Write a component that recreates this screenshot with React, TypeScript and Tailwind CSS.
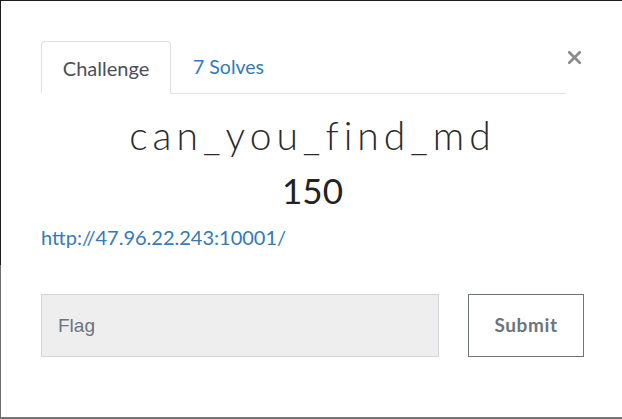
import { X } from "lucide-react";

const App = () => {
  return (
    <div className="w-[622px] h-[419px] bg-[linear-gradient(to_bottom,#1c1c1c_265px,#6e6e6e_265px)] pl-px pt-px pb-px overflow-hidden">
      <div className="relative h-full w-full bg-white border-b border-[#7a7a7a] pl-10 pr-[38px] pt-10 font-['Lato','Open_Sans',sans-serif]">
        {/* Close button */}
        <button className="absolute right-[37px] top-[46px] text-[#8a8a8a]">
          <X className="w-[21px] h-[21px]" strokeWidth={3} />
        </button>

        {/* Tabs */}
        <div className="flex w-[525px] border-b border-[#dee2e6] h-[53px]">
          <div className="-mb-px flex items-center justify-center w-[130px] border border-[#dee2e6] border-b-white bg-white rounded-t-[4px] text-[20px] text-[#495057]">
            Challenge
          </div>
          <div className="flex items-center px-[22px] text-[19.5px] text-[#337ab7]">
            7 Solves
          </div>
        </div>

        {/* Title + value */}
        <h2 className="mt-[18px] text-center text-[39px] leading-[46px] tracking-[5px] text-[#2b2b2b] font-light font-['Lato',sans-serif]">
          can_you_find_md
        </h2>
        <h4 className="mt-[12px] text-center text-[35px] leading-[40px] text-[#222]">
          150
        </h4>

        {/* Link */}
        <a className="block mt-[14px] text-[20px] leading-[26px] text-[#337ab7]">
          http://47.96.22.243:10001/
        </a>

        {/* Flag form */}
        <div className="flex mt-[44px] gap-[29px]">
          <input
            placeholder="Flag"
            className="w-[398px] shrink-0 h-[63px] bg-[#eeeeee] border border-[#d2d5d9] px-4 text-[19px] font-['Liberation_Sans',Arial,sans-serif] placeholder:text-[#6c757d] outline-none"
          />
          <button className="w-[116px] shrink-0 h-[63px] border border-[#6c757d] bg-white text-[19px] font-bold text-[#6c757d] tracking-[0.6px]">
            Submit
          </button>
        </div>
      </div>
    </div>
  );
};

export default App;
